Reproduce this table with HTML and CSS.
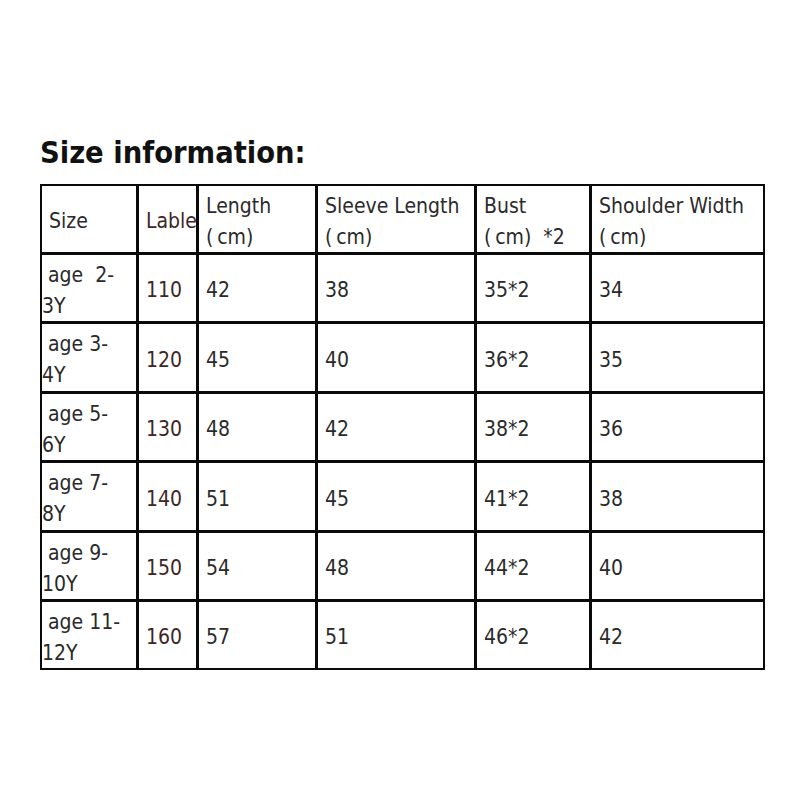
FILE: index.html
```html
<!DOCTYPE html>
<html>
<head>
<meta charset="utf-8">
<link rel="stylesheet" href="styles.css">
</head>
<body>
<div class="page">
  <h1 class="title">Size information:</h1>
  <div class="size-table">
    <div class="cell">Size</div>
    <div class="cell lable">Lable</div>
    <div class="cell">Length<br>(&#8201;cm)</div>
    <div class="cell">Sleeve Length<br>(&#8201;cm)</div>
    <div class="cell">Bust<br>(&#8201;cm)&nbsp;&nbsp;*2</div>
    <div class="cell">Shoulder Width<br>(&#8201;cm)</div>

    <div class="cell age">&nbsp;age&nbsp; 2-<br>3Y</div>
    <div class="cell lable">110</div>
    <div class="cell">42</div>
    <div class="cell">38</div>
    <div class="cell">35*2</div>
    <div class="cell">34</div>

    <div class="cell age">&nbsp;age 3-<br>4Y</div>
    <div class="cell lable">120</div>
    <div class="cell">45</div>
    <div class="cell">40</div>
    <div class="cell">36*2</div>
    <div class="cell">35</div>

    <div class="cell age">&nbsp;age 5-<br>6Y</div>
    <div class="cell lable">130</div>
    <div class="cell">48</div>
    <div class="cell">42</div>
    <div class="cell">38*2</div>
    <div class="cell">36</div>

    <div class="cell age">&nbsp;age 7-<br>8Y</div>
    <div class="cell lable">140</div>
    <div class="cell">51</div>
    <div class="cell">45</div>
    <div class="cell">41*2</div>
    <div class="cell">38</div>

    <div class="cell age">&nbsp;age 9-<br>10Y</div>
    <div class="cell lable">150</div>
    <div class="cell">54</div>
    <div class="cell">48</div>
    <div class="cell">44*2</div>
    <div class="cell">40</div>

    <div class="cell age">&nbsp;age 11-<br>12Y</div>
    <div class="cell lable">160</div>
    <div class="cell">57</div>
    <div class="cell">51</div>
    <div class="cell">46*2</div>
    <div class="cell">42</div>
  </div>
</div>
</body>
</html>
```

FILE: styles.css
```css
html, body {
  margin: 0;
  padding: 0;
  background: #ffffff;
}

.page {
  padding: 135px 0 0 40px;
  font-family: "DejaVu Sans Condensed", "DejaVu Sans", sans-serif;
  font-stretch: condensed;
}

.title {
  margin: 0 0 13px 0;
  font-size: 30.5px;
  line-height: 36px;
  font-weight: bold;
  color: #111111;
}

.size-table {
  display: grid;
  width: 725px;
  box-sizing: border-box;
  grid-template-columns: 94px 57px 116px 156px 112px 171px;
  grid-template-rows: 66px 66px 67px 66px 67px 66px 66px;
  gap: 3px;
  padding: 2px;
  background: #0a0a0a;
}

.cell {
  background: #ffffff;
  display: flex;
  align-items: center;
  padding: 5px 0 0 7px;
  font-size: 21px;
  line-height: 31px;
  color: #2a2a2a;
  white-space: nowrap;
  overflow: visible;
}

.cell.age {
  padding-left: 0;
}

.cell.lable {
  color: #3e2626;
}
```
